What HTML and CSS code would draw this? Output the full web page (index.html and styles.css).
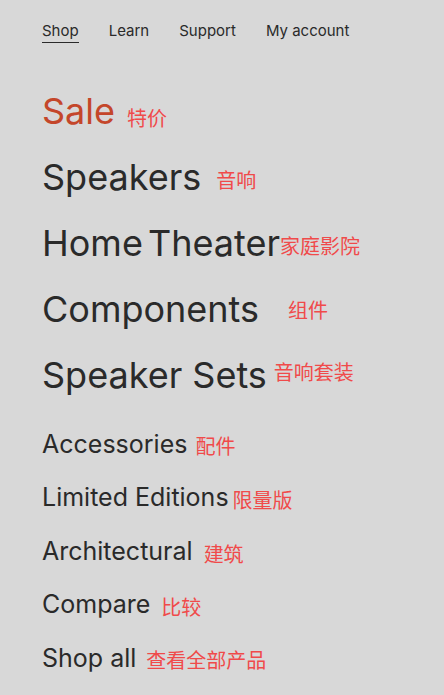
FILE: index.html
```html
<!DOCTYPE html>
<html lang="en">
<head>
  <meta charset="UTF-8" />
  <meta name="viewport" content="width=device-width, initial-scale=1.0"/>
  <title>Shop</title>
  <link rel="stylesheet" href="styles.css">
</head>
<body>
  <nav class="topnav">
    <a class="topnav-link active" href="#">Shop</a>
    <a class="topnav-link" href="#">Learn</a>
    <a class="topnav-link" href="#">Support</a>
    <a class="topnav-link" href="#">My account</a>
  </nav>

  <ul class="menu menu-large">
    <li class="sale"><a href="#">Sale</a><span class="zh">特价</span></li>
    <li class="speakers"><a href="#">Speakers</a><span class="zh">音响</span></li>
    <li class="theater"><a href="#">Home Theater</a><span class="zh">家庭影院</span></li>
    <li class="components"><a href="#">Components</a><span class="zh">组件</span></li>
    <li class="sets"><a href="#">Speaker Sets</a><span class="zh">音响套装</span></li>
  </ul>

  <ul class="menu menu-small">
    <li class="accessories"><a href="#">Accessories</a><span class="zh">配件</span></li>
    <li class="limited"><a href="#">Limited Editions</a><span class="zh">限量版</span></li>
    <li class="architectural"><a href="#">Architectural</a><span class="zh">建筑</span></li>
    <li class="compare"><a href="#">Compare</a><span class="zh">比较</span></li>
    <li class="shopall"><a href="#">Shop all</a><span class="zh">查看全部产品</span></li>
  </ul>
</body>
</html>
```

FILE: styles.css
```css
body {
  margin: 0;
  background: #d8d8d8;
  color: #2a2a2a;
  font-family: Inter, "Noto Sans CJK SC", sans-serif;
}
a {
  color: inherit;
  text-decoration: none;
}

/* top nav */
.topnav {
  display: flex;
  gap: 30px;
  padding: 21px 42px 0;
}
.topnav-link {
  display: inline-block;
  font-size: 15px;
  line-height: 20px;
  padding-bottom: 1px;
  border-bottom: 1px solid transparent;
}
.topnav-link.active {
  border-bottom-color: #2a2a2a;
}

/* menus */
.menu {
  list-style: none;
  margin: 0;
  padding: 0 42px;
}
.menu-large {
  margin-top: 35px;
  font-size: 36px;
  line-height: 66px;
}
.menu-large li {
  height: 66px;
}
.theater a {
  word-spacing: -5px;
}
.menu-small {
  margin-top: 9.5px;
  font-size: 25px;
  line-height: 53.5px;
}
.menu-small li {
  height: 53.5px;
}
.menu li {
  white-space: nowrap;
}
.sale a {
  color: #c4462a;
}
.zh {
  font-family: "Noto Sans CJK SC", sans-serif;
  font-size: 20px;
  line-height: 1;
  color: #f04a4a;
}

/* translation labels sit a little off each item */
.sale .zh { margin-left: 12px; vertical-align: -2px; }
.speakers .zh { margin-left: 15px; vertical-align: 2px; }
.theater .zh { margin-left: 0; vertical-align: 2px; }
.components .zh { margin-left: 29px; vertical-align: 4px; }
.sets .zh { margin-left: 7px; vertical-align: 8px; }
.accessories .zh { margin-left: 8px; vertical-align: -1px; }
.limited .zh { margin-left: 4px; vertical-align: -2px; }
.architectural .zh { margin-left: 11px; vertical-align: -2px; }
.compare .zh { margin-left: 11px; vertical-align: -2px; }
.shopall .zh { margin-left: 10px; vertical-align: -1px; }
```
